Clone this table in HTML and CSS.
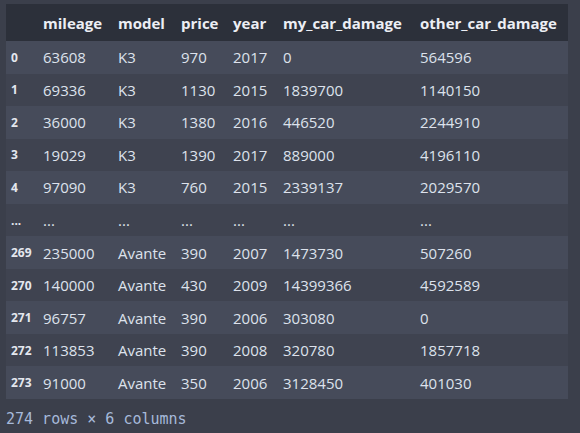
FILE: index.html
```html
<!DOCTYPE html>
<html>
<head>
<meta charset="utf-8">
<link rel="stylesheet" href="styles.css">
</head>
<body>
<div class="output">
<table class="df">
<colgroup>
<col class="c0"><col class="c1"><col class="c2"><col class="c3"><col class="c4"><col class="c5"><col class="c6">
</colgroup>
<thead>
<tr><th></th><th>mileage</th><th>model</th><th>price</th><th>year</th><th>my_car_damage</th><th>other_car_damage</th></tr>
</thead>
<tbody>
<tr><th>0</th><td>63608</td><td>K3</td><td>970</td><td>2017</td><td>0</td><td>564596</td></tr>
<tr><th>1</th><td>69336</td><td>K3</td><td>1130</td><td>2015</td><td>1839700</td><td>1140150</td></tr>
<tr><th>2</th><td>36000</td><td>K3</td><td>1380</td><td>2016</td><td>446520</td><td>2244910</td></tr>
<tr><th>3</th><td>19029</td><td>K3</td><td>1390</td><td>2017</td><td>889000</td><td>4196110</td></tr>
<tr><th>4</th><td>97090</td><td>K3</td><td>760</td><td>2015</td><td>2339137</td><td>2029570</td></tr>
<tr><th>...</th><td>...</td><td>...</td><td>...</td><td>...</td><td>...</td><td>...</td></tr>
<tr><th>269</th><td>235000</td><td>Avante</td><td>390</td><td>2007</td><td>1473730</td><td>507260</td></tr>
<tr><th>270</th><td>140000</td><td>Avante</td><td>430</td><td>2009</td><td>14399366</td><td>4592589</td></tr>
<tr><th>271</th><td>96757</td><td>Avante</td><td>390</td><td>2006</td><td>303080</td><td>0</td></tr>
<tr><th>272</th><td>113853</td><td>Avante</td><td>390</td><td>2008</td><td>320780</td><td>1857718</td></tr>
<tr><th>273</th><td>91000</td><td>Avante</td><td>350</td><td>2006</td><td>3128450</td><td>401030</td></tr>
</tbody>
</table>
<p class="shape">274 rows × 6 columns</p>
</div>
</body>
</html>
```

FILE: styles.css
```css
html, body {
  margin: 0;
  padding: 0;
  background: #3b3f4b;
  width: 580px;
  height: 433px;
  overflow: hidden;
}

.output {
  padding: 4px 0 0 6px;
  font-family: "Open Sans", sans-serif;
}

.df {
  border-collapse: collapse;
  border-spacing: 0;
  table-layout: fixed;
  width: 562px;
  font-size: 15px;
  color: #dde2ec;
}

.c0 { width: 29px; }
.c1 { width: 75px; }
.c2 { width: 63px; }
.c3 { width: 52px; }
.c4 { width: 50px; }
.c5 { width: 137px; }
.c6 { width: 156px; }

.df th,
.df td {
  padding: 0 0 0 8px;
  text-align: left;
  white-space: nowrap;
  vertical-align: middle;
}

.df thead tr {
  background: #2c303a;
  height: 37px;
}

.df thead th {
  font-weight: 700;
  color: #eceef4;
  font-size: 15px;
}

.df tbody tr {
  height: 32.55px;
}

.df tbody tr:nth-child(odd) {
  background: #464b5a;
}

.df tbody tr:nth-child(even) {
  background: #3f4350;
}

.df tbody th {
  font-size: 12px;
  font-weight: 700;
  padding-left: 5px;
  color: #e4e7ef;
}

.shape {
  margin: 10px 0 0 0;
  font-family: "DejaVu Sans Mono", monospace;
  font-size: 15px;
  line-height: 20px;
  color: #a6b9da;
}
```
